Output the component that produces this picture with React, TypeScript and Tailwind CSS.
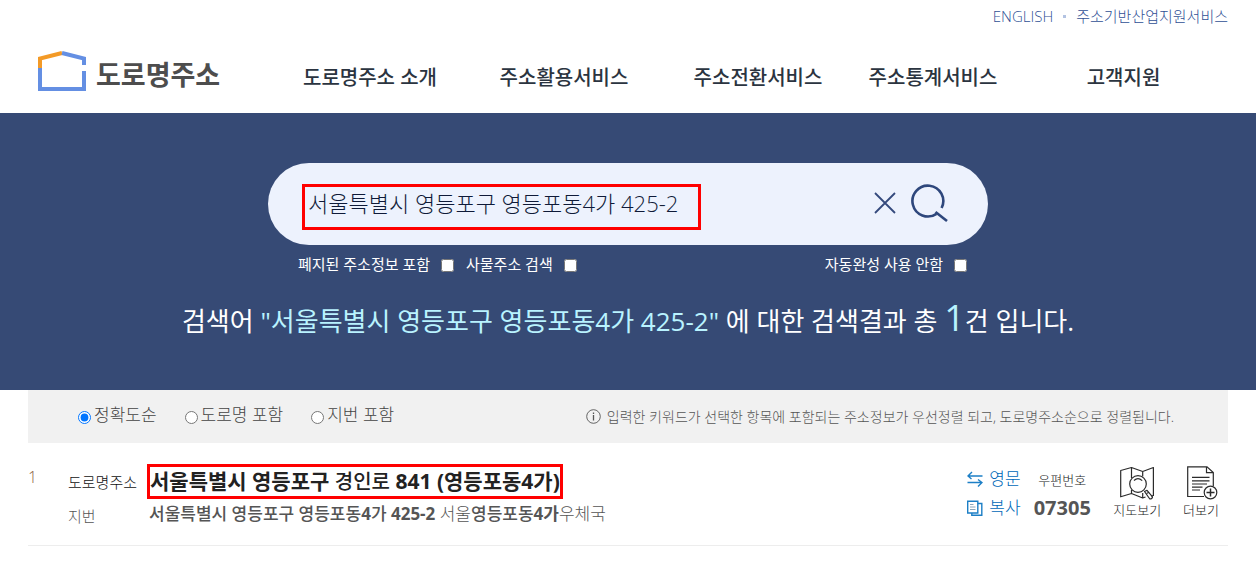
import { useState } from 'react';

const NAV_ITEMS = ['도로명주소 소개', '주소활용서비스', '주소전환서비스', '주소통계서비스', '고객지원'];

const SORT_OPTIONS = [
  { id: 'accuracy', label: '정확도순' },
  { id: 'road', label: '도로명 포함' },
  { id: 'jibun', label: '지번 포함' },
];

const KEYWORD = '서울특별시 영등포구 영등포동4가 425-2';

function Logo() {
  return (
    <a href="#" className="flex items-start gap-[10px] text-[27px] leading-[48px] font-bold text-[#4d4d4d]">
      <svg className="w-[48px] h-[40px]" viewBox="0 0 48 40" fill="none" strokeWidth="4">
        <path d="M2 17V7.5L24 2" stroke="#f39a27" />
        <path d="M24 2L46 7.5V14" stroke="#648fe3" />
        <path d="M2 17V38H46V20" stroke="#648fe3" />
      </svg>
      도로명주소
    </a>
  );
}

function Header() {
  return (
    <header className="h-[113px] px-7">
      <div className="mx-auto max-w-[1200px]">
        <div className="flex h-8 items-center justify-end gap-[10px] text-[15px] text-[#2f5095] font-light">
          <a href="#">ENGLISH</a>
          <span className="size-[3px] bg-[#b3c3e2]" />
          <a href="#">주소기반산업지원서비스</a>
        </div>
        <div className="flex items-start pt-[19px] pl-[10px]">
          <div className="w-[235px] shrink-0">
            <Logo />
          </div>
          <nav className="-mr-2 grid flex-1 grid-cols-[194fr_194fr_194fr_156fr_225fr] pt-[7px] text-center text-[20px] leading-[40px] font-medium text-[#2b3440]">
            {NAV_ITEMS.map((item) => (
              <a key={item} href="#">{item}</a>
            ))}
          </nav>
        </div>
      </div>
    </header>
  );
}

function SearchSection() {
  const [keyword, setKeyword] = useState(KEYWORD);

  return (
    <section className="bg-[#364a75] px-7 pt-[50px] pb-[44px] text-white">
      <form className="mx-auto max-w-[720px]" onSubmit={(e) => e.preventDefault()}>
        <div className="flex h-[82px] items-center rounded-full bg-[#edf2fd] pl-[34px] pr-[40px] pt-[6px]">
          <input
            type="text"
            aria-label="주소 검색"
            value={keyword}
            onChange={(e) => setKeyword(e.target.value)}
            className="h-[46px] w-[399px] border-[3px] border-[#ff0000] px-[3px] pb-[10px] text-[22px] font-light text-[#0f1a38] outline-none"
          />
          <button type="button" aria-label="지우기" onClick={() => setKeyword('')} className="ml-auto mr-[14px] pb-[8px]">
            <svg className="size-[22px]" viewBox="0 0 22 22" fill="none" stroke="#34497c" strokeWidth="1.8">
              <path d="M1 1L21 21M21 1L1 21" />
            </svg>
          </button>
          <button type="submit" aria-label="검색" className="pb-[8px]">
            <svg className="size-[38px]" viewBox="0 0 38 38" fill="none" stroke="#2e477c" strokeWidth="2.6">
              <path d="M31.6 24A15.4 15.4 0 1 0 26.5 29.8" />
              <path d="M25.5 28L37 37" />
            </svg>
          </button>
        </div>
        <div className="flex items-center gap-3 pt-[8px] pl-[30px] pr-[21px] text-[15px] leading-[22px]">
          <label className="flex items-center gap-[11px]">
            폐지된 주소정보 포함
            <input type="checkbox" className="mt-[2px] size-[13px]" />
          </label>
          <label className="flex items-center gap-[11px]">
            사물주소 검색
            <input type="checkbox" className="mt-[2px] size-[13px]" />
          </label>
          <label className="ml-auto flex items-center gap-[11px]">
            자동완성 사용 안함
            <input type="checkbox" className="mt-[2px] size-[13px]" />
          </label>
        </div>
      </form>
      <p className="pt-[18px] text-center text-[26px] leading-[50px]">
        검색어 <span className="text-[#b9f3ff]">"{KEYWORD}"</span> 에 대한 검색결과 총{' '}
        <span className="text-[36px] text-[#b9f3ff]">1</span>건 입니다.
      </p>
    </section>
  );
}

function SortBar() {
  const [sort, setSort] = useState('accuracy');

  return (
    <div className="flex h-[53px] items-center justify-between bg-[#f1f1f1] pl-[50px] pr-[54px]">
      <div className="flex gap-[28px] pb-[4px] text-[17px] leading-[24px] font-light text-[#444]">
        {SORT_OPTIONS.map((option) => (
          <label key={option.id} className="flex items-center gap-[3px]">
            <input
              type="radio"
              name="sort"
              className="mt-[6px] size-[13px]"
              checked={sort === option.id}
              onChange={() => setSort(option.id)}
            />
            {option.label}
          </label>
        ))}
      </div>
      <p className="flex items-center gap-[6px] text-[14px] font-light text-[#555]">
        <svg className="size-[15px]" viewBox="0 0 15 15" fill="none" stroke="#555">
          <circle cx="7.5" cy="7.5" r="6.8" strokeWidth="0.9" />
          <path d="M7.5 6V11.5M7.5 3.5V5" strokeWidth="1.3" />
        </svg>
        입력한 키워드가 선택한 항목에 포함되는 주소정보가 우선정렬 되고, 도로명주소순으로 정렬됩니다.
      </p>
    </div>
  );
}

function SwapIcon() {
  return (
    <svg className="size-[16px]" viewBox="0 0 16 16" fill="none" stroke="#1d7fc6" strokeWidth="1.4">
      <path d="M15.5 5H1.5M5 1L1 5L4.5 8" />
      <path d="M.5 11.5H14.5M11 8.500L15 11.5L11 15.5" />
    </svg>
  );
}

function CopyIcon() {
  return (
    <svg className="size-[16px]" viewBox="0 0 16 16" fill="none" stroke="#1d7fc6" strokeWidth="1.4">
      <path d="M.7 1.2H10.8V13H.7Z" />
      <path d="M10.8 3.5H14.8V15.3H4.8V13" />
      <path d="M3 4.5H6.5M3 7H8.5M3 9.5H8.5" stroke="#6f8fa8" strokeWidth="0.8" />
    </svg>
  );
}

function MapIcon() {
  return (
    <svg className="size-[34px]" viewBox="0 0 34 34" fill="none" stroke="#2b2b2b" strokeWidth="1.2" strokeLinejoin="round">
      <path d="M11.5 27.5L.7 30.8V4.5L11.5 1.5L22.7 5.5L33.4 1.5V29.5L31 30M11.5 27.5L22.7 32L25.5 31M11.5 1.5V12M11.5 24V27.5M22.7 5.5V10.5M22.7 27V32" />
      <circle cx="18" cy="18" r="8.3" />
      <path d="M14 14.5Q18 10.5 22.2 14.7" />
      <path d="M24.5 25.5L27 24.3L32.5 30.8Q32.5 33 29.8 33Z" />
      <path d="M26.5 27.5L29 26.3" />
    </svg>
  );
}

function DocumentPlusIcon() {
  return (
    <svg className="size-[34px]" viewBox="0 0 34 34" fill="none" stroke="#2b2b2b" strokeWidth="1.2">
      <path d="M20 30.5H3.7V.8H23L29.3 6.5V20" />
      <path d="M22.5 1V6.7H29" />
      <path d="M8 11.3H25.5M8 14.8H25.5M8 18H23M8 21.2H18.5M8 24H16" />
      <circle cx="26.5" cy="26.5" r="6.3" />
      <path d="M26.5 22.5V30.5M22.5 26.5H30.5" strokeWidth="1.5" />
    </svg>
  );
}

function ResultItem() {
  return (
    <li className="flex h-[103px] border-b border-[#ededed] pt-[21px]">
      <span className="w-[40px] text-[16px] leading-[26px] font-light text-[#8a5a3c]">1</span>
      <dl className="grid grid-cols-[79px_auto] content-start text-[17px] text-[#555]">
        <dt className="text-[15px] leading-[36px] font-light text-[#111]">도로명주소</dt>
        <dd>
          <a href="#" className="block w-fit border-[3px] border-[#ff0000] text-[21px] leading-[28px] font-bold text-[#222]">
            서울특별시 영등포구 <span className="text-[20px] font-medium">경인로</span> 841 (영등포동4가)
          </a>
        </dd>
        <dt className="text-[15px] leading-[32px] font-light">지번</dt>
        <dd className="pl-[2px] leading-[28px] font-light">
          <b className="font-medium">서울특별시 영등포구 영등포동</b>
          <b className="font-bold">4</b>
          <b className="font-medium">가 </b>
          <b className="font-bold">425-2</b> 서울<b className="font-medium">영등포동</b>
          <b className="font-bold">4가</b>우체국
        </dd>
      </dl>
      <div className="ml-auto flex text-[13px] leading-[18px] font-light text-[#222]">
        <div className="flex w-[64px] flex-col gap-[5px] pt-[3px] text-[17px] leading-[24px] text-[#0068b8]">
          <button type="button" className="flex items-center gap-[6px]">
            <SwapIcon />
            영문
          </button>
          <button type="button" className="flex items-center gap-[6px]">
            <CopyIcon />
            복사
          </button>
        </div>
        <dl className="w-[62px] pt-[7px] text-center">
          <dt>우편번호</dt>
          <dd className="pt-[7px] text-[20px] leading-[24px] font-bold text-[#555]">07305</dd>
        </dl>
        <button type="button" className="ml-5 flex flex-col items-center gap-[1px] pt-[2px]">
          <MapIcon />
          지도보기
        </button>
        <button type="button" className="ml-[22px] mr-[9px] flex flex-col items-center gap-[1px] pt-[2px]">
          <DocumentPlusIcon />
          더보기
        </button>
      </div>
    </li>
  );
}

export default function App() {
  return (
    <div className="min-h-screen bg-white font-['Open_Sans','Noto_Sans_CJK_KR',sans-serif]">
      <Header />
      <SearchSection />
      <main className="px-7">
        <div className="mx-auto max-w-[1200px]">
          <SortBar />
          <ul>
            <ResultItem />
          </ul>
        </div>
      </main>
    </div>
  );
}
